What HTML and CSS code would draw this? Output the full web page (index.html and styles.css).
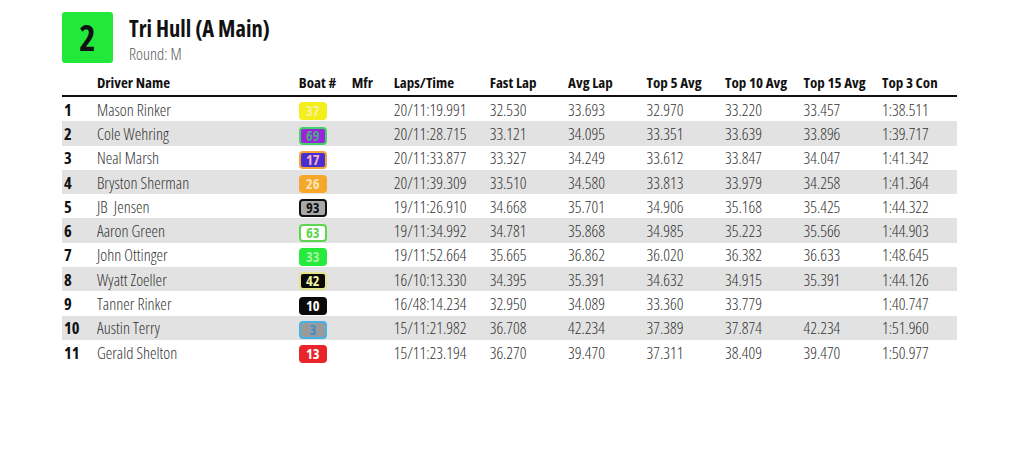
FILE: index.html
```html
<!DOCTYPE html>
<html>
<head>
<meta charset="utf-8">
<link rel="stylesheet" href="styles.css">
</head>
<body>
<div class="page">
  <div class="heat">
    <div class="heat-num">2</div>
    <div class="heat-info">
      <div class="heat-title">Tri Hull (A Main)</div>
      <div class="heat-round">Round: M</div>
    </div>
  </div>
  <table class="results">
    <colgroup>
      <col class="c-pos"><col class="c-name"><col class="c-boat"><col class="c-mfr"><col class="c-laps">
      <col class="c-num"><col class="c-num"><col class="c-num"><col class="c-num"><col class="c-num"><col class="c-last">
    </colgroup>
    <thead>
      <tr><th></th><th>Driver Name</th><th>Boat #</th><th>Mfr</th><th>Laps/Time</th><th>Fast Lap</th><th>Avg Lap</th><th>Top 5 Avg</th><th>Top 10 Avg</th><th>Top 15 Avg</th><th>Top 3 Con</th></tr>
    </thead>
    <tbody>
      <tr><td class="pos">1</td><td>Mason Rinker</td><td><span class="badge b37">37</span></td><td></td><td>20/11:19.991</td><td>32.530</td><td>33.693</td><td>32.970</td><td>33.220</td><td>33.457</td><td>1:38.511</td></tr>
      <tr><td class="pos">2</td><td>Cole Wehring</td><td><span class="badge b69">69</span></td><td></td><td>20/11:28.715</td><td>33.121</td><td>34.095</td><td>33.351</td><td>33.639</td><td>33.896</td><td>1:39.717</td></tr>
      <tr><td class="pos">3</td><td>Neal Marsh</td><td><span class="badge b17">17</span></td><td></td><td>20/11:33.877</td><td>33.327</td><td>34.249</td><td>33.612</td><td>33.847</td><td>34.047</td><td>1:41.342</td></tr>
      <tr><td class="pos">4</td><td>Bryston Sherman</td><td><span class="badge b26">26</span></td><td></td><td>20/11:39.309</td><td>33.510</td><td>34.580</td><td>33.813</td><td>33.979</td><td>34.258</td><td>1:41.364</td></tr>
      <tr><td class="pos">5</td><td>JB  Jensen</td><td><span class="badge b93">93</span></td><td></td><td>19/11:26.910</td><td>34.668</td><td>35.701</td><td>34.906</td><td>35.168</td><td>35.425</td><td>1:44.322</td></tr>
      <tr><td class="pos">6</td><td>Aaron Green</td><td><span class="badge b63">63</span></td><td></td><td>19/11:34.992</td><td>34.781</td><td>35.868</td><td>34.985</td><td>35.223</td><td>35.566</td><td>1:44.903</td></tr>
      <tr><td class="pos">7</td><td>John Ottinger</td><td><span class="badge b33">33</span></td><td></td><td>19/11:52.664</td><td>35.665</td><td>36.862</td><td>36.020</td><td>36.382</td><td>36.633</td><td>1:48.645</td></tr>
      <tr><td class="pos">8</td><td>Wyatt Zoeller</td><td><span class="badge b42">42</span></td><td></td><td>16/10:13.330</td><td>34.395</td><td>35.391</td><td>34.632</td><td>34.915</td><td>35.391</td><td>1:44.126</td></tr>
      <tr><td class="pos">9</td><td>Tanner Rinker</td><td><span class="badge b10">10</span></td><td></td><td>16/48:14.234</td><td>32.950</td><td>34.089</td><td>33.360</td><td>33.779</td><td></td><td>1:40.747</td></tr>
      <tr><td class="pos">10</td><td>Austin Terry</td><td><span class="badge b3">3</span></td><td></td><td>15/11:21.982</td><td>36.708</td><td>42.234</td><td>37.389</td><td>37.874</td><td>42.234</td><td>1:51.960</td></tr>
      <tr><td class="pos">11</td><td>Gerald Shelton</td><td><span class="badge b13">13</span></td><td></td><td>15/11:23.194</td><td>36.270</td><td>39.470</td><td>37.311</td><td>38.409</td><td>39.470</td><td>1:50.977</td></tr>
    </tbody>
  </table>
</div>
</body>
</html>
```

FILE: styles.css
```css
html, body {
  margin: 0;
  padding: 0;
  background: #ffffff;
}

body {
  font-family: "Open Sans", "Liberation Sans", sans-serif;
  font-stretch: 75%;
  color: #222;
}

.page {
  padding: 12px 67px 0 62px;
}

.heat {
  display: flex;
  align-items: flex-start;
  gap: 16px;
}

.heat-num {
  width: 51px;
  height: 51px;
  background: #22e83c;
  border-radius: 3px;
  display: flex;
  align-items: center;
  justify-content: center;
  font-size: 35px;
  font-weight: 700;
  color: #111;
}

.heat-info {
  padding-top: 3px;
}

.heat-title {
  font-size: 22.5px;
  font-weight: 700;
  line-height: 28px;
  color: #111;
}

.heat-round {
  font-size: 16.5px;
  font-weight: 300;
  line-height: 22px;
  color: #5a5a5a;
}

.results {
  width: 895px;
  border-collapse: collapse;
  margin-top: 7px;
  font-size: 16.5px;
}

.c-pos { width: 35px; }
.c-name { width: 202px; }
.c-boat { width: 53px; }
.c-mfr { width: 42px; }
.c-laps { width: 96px; }
.c-num { width: 78.5px; }
.c-last { width: 75px; }

.results th {
  text-align: left;
  font-weight: 700;
  font-size: 15px;
  color: #111;
  padding: 0 0 3px 0;
  height: 19px;
  border-bottom: 2px solid #111;
  white-space: nowrap;
}

.results td {
  padding: 0;
  height: 24.3px;
  font-weight: 300;
  color: #333;
  white-space: pre;
}

.results tbody tr:nth-child(even) td {
  background: #e2e2e2;
}

.results td.pos {
  font-weight: 700;
  color: #111;
  padding-left: 2px;
}

.badge {
  display: inline-block;
  box-sizing: border-box;
  width: 28px;
  height: 18px;
  line-height: 14px;
  border: 2px solid;
  border-radius: 4px;
  text-align: center;
  font-weight: 700;
  font-size: 14.5px;
  vertical-align: middle;
}

.b37 { background: #f4ee1c; border-color: #f4ee1c; color: #f6f3a0; }
.b69 { background: #9c22dc; border-color: #3fd36a; color: #4aa888; }
.b17 { background: #4a2ed2; border-color: #f1a43a; color: #f2b3c6; }
.b26 { background: #f6a82a; border-color: #f6a82a; color: #fde4b8; }
.b93 { background: #a8a8a8; border-color: #111; color: #111; }
.b63 { background: #ffffff; border-color: #5cd64c; color: #5cd64c; }
.b33 { background: #26ea3c; border-color: #26ea3c; color: #a6f5a6; }
.b42 { background: #0a0a0a; border-color: #e4e48a; color: #f2f2a6; }
.b10 { background: #0a0a0a; border-color: #0a0a0a; color: #ffffff; }
.b3  { background: #9a9a9a; border-color: #44b2e4; color: #3a8fd0; }
.b13 { background: #e9242a; border-color: #e9242a; color: #ffffff; }
```
